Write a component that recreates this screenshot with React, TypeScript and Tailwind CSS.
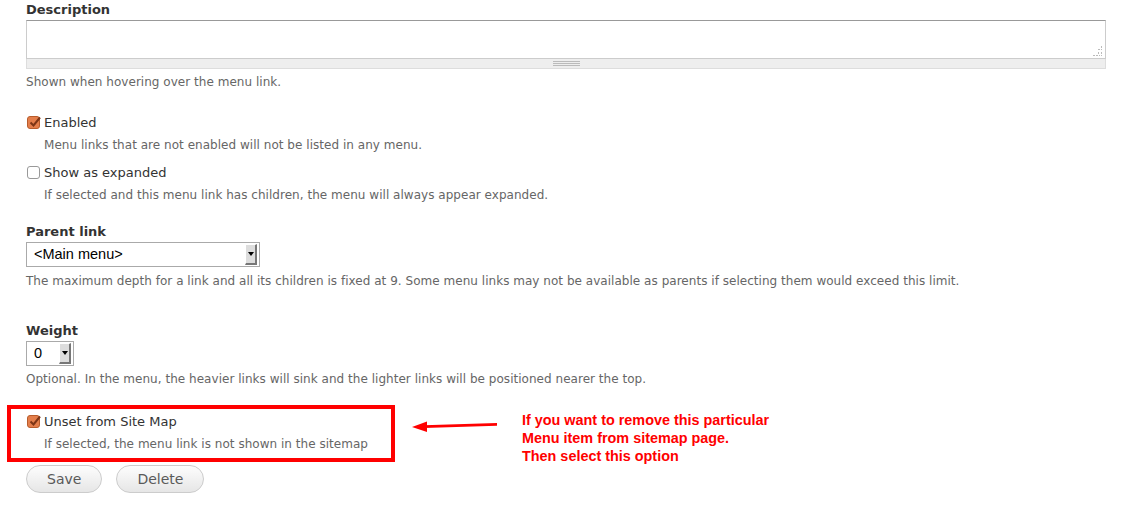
import React from "react"

function Checkbox({ checked }: { checked?: boolean }) {
  if (!checked) {
    return <span className="ml-[1px] mr-[4px] inline-block h-[13px] w-[13px] shrink-0 rounded-[3px] border border-[#999] bg-white" />
  }
  return (
    <span className="relative ml-[1px] mr-[4px] inline-block h-[13px] w-[13px] shrink-0 rounded-[3px] border border-[#b85c2c] bg-[#e47e4b]">
      <svg className="absolute -top-[2px] left-0" width="14" height="14" viewBox="0 0 14 14">
        <path d="M2.5 7.5 L5.5 10.5 L12 2.5" fill="none" stroke="#7d3516" strokeWidth="2" />
      </svg>
    </span>
  )
}

function CheckItem({ label, desc, checked }: { label: string; desc: string; checked?: boolean }) {
  return (
    <div>
      <div className="flex items-center text-[13px] leading-[19px] text-[#333]">
        <Checkbox checked={checked} />
        <span>{label}</span>
      </div>
      <div className="mt-[4px] pl-[18px] text-[12px] leading-[18px] tracking-[0.03px] text-[#666]">{desc}</div>
    </div>
  )
}

function Select({ value, width }: { value: string; width: string }) {
  return (
    <div className={`flex h-[25px] items-center border border-[#aaa] bg-white p-[2px] ${width}`}>
      <span className="flex-1 pl-[5px] font-['Liberation_Sans',Arial,sans-serif] text-[14.5px] text-black">{value}</span>
      <span className="flex h-[21px] w-[12px] items-center justify-center border-t border-l border-t-white border-l-white border-r-2 border-b-2 border-r-[#777] border-b-[#777] bg-[#ddd]">
        <svg width="6" height="4" viewBox="0 0 6 4">
          <path d="M0 0 H6 L3 4 Z" fill="#000" />
        </svg>
      </span>
    </div>
  )
}

export default function App() {
  return (
    <div className="min-h-[508px] w-[1130px] bg-white pl-[26px] pr-[24px] font-['DejaVu_Sans',sans-serif]">
      <div className="text-[13px] font-bold leading-[19px] text-[#333]">Description</div>
      <div className="mt-[1px]">
        <div className="relative h-[39px] border border-[#ccc] border-t-[#999] bg-white">
          <svg className="absolute bottom-[2px] right-[2px]" width="10" height="10" viewBox="0 0 10 10">
            <g fill="#bbb">
              <rect x="8" y="0" width="1" height="2" />
              <rect x="5" y="3" width="2" height="1" />
              <rect x="8" y="3" width="1" height="1" />
              <rect x="5" y="6" width="1" height="2" />
              <rect x="8" y="6" width="1" height="2" />
              <rect x="0" y="9" width="2" height="1" />
              <rect x="3" y="9" width="2" height="1" />
              <rect x="6" y="9" width="1" height="1" />
              <rect x="8" y="9" width="1" height="1" />
            </g>
          </svg>
        </div>
        <div className="flex h-[10px] flex-col items-center justify-center gap-[1px] border-x border-b border-[#ddd] bg-[#eee]">
          <span className="h-px w-[27px] bg-[#bbb]" />
          <span className="h-px w-[27px] bg-[#bbb]" />
          <span className="h-px w-[27px] bg-[#bbb]" />
        </div>
      </div>
      <div className="mt-[4px] text-[12px] leading-[18px] tracking-[0.03px] text-[#666]">Shown when hovering over the menu link.</div>

      <div className="mt-[22px]">
        <CheckItem checked label="Enabled" desc="Menu links that are not enabled will not be listed in any menu." />
      </div>
      <div className="mt-[9px]">
        <CheckItem label="Show as expanded" desc="If selected and this menu link has children, the menu will always appear expanded." />
      </div>

      <div className="mt-[18px] text-[13px] font-bold leading-[19px] text-[#333]">Parent link</div>
      <div className="mt-[1px]">
        <Select value="<Main menu>" width="w-[234px]" />
      </div>
      <div className="mt-[5px] text-[12px] leading-[18px] tracking-[0.03px] text-[#666]">
        The maximum depth for a link and all its children is fixed at 9. Some menu links may not be available as parents if selecting them would exceed this limit.
      </div>

      <div className="mt-[31px] text-[13px] font-bold leading-[19px] text-[#333]">Weight</div>
      <div className="mt-[1px]">
        <Select value="0" width="w-[48px]" />
      </div>
      <div className="mt-[4px] text-[12px] leading-[18px] tracking-[0.03px] text-[#666]">
        Optional. In the menu, the heavier links will sink and the lighter links will be positioned nearer the top.
      </div>

      <div className="mt-[17px] flex h-[57px] items-start">
        <div className="-ml-[19px] w-[388px] border-4 border-[#f00] pb-[5px] pl-[15px] pt-[3px]">
          <CheckItem checked label="Unset from Site Map" desc="If selected, the menu link is not shown in the sitemap" />
        </div>
        <svg className="ml-[17px] mt-[14px]" width="86" height="14" viewBox="0 0 86 14">
          <path d="M12 6.2 L85 4 L85 6.8 L12 9 Z" fill="#f00" />
          <path d="M0 8 L15 2.5 L15 13 Z" fill="#f00" />
        </svg>
        <div className="ml-[24px] mt-[6px] font-['Liberation_Sans',Arial,sans-serif] text-[14.4px] font-bold leading-[18px] text-[#f00]">
          <div>If you want to remove this particular</div>
          <div>Menu item from sitemap page.</div>
          <div>Then select this option</div>
        </div>
      </div>

      <div className="mt-[3px] flex gap-[14px]">
        <button className="h-[28px] rounded-full border border-[#ccc] bg-gradient-to-b from-[#fdfdfd] to-[#e6e6e6] px-[20px] text-[14px] text-[#5a5a5a]">
          Save
        </button>
        <button className="h-[28px] rounded-full border border-[#ccc] bg-gradient-to-b from-[#fdfdfd] to-[#e6e6e6] px-[20px] text-[14px] text-[#5a5a5a]">
          Delete
        </button>
      </div>
    </div>
  )
}
